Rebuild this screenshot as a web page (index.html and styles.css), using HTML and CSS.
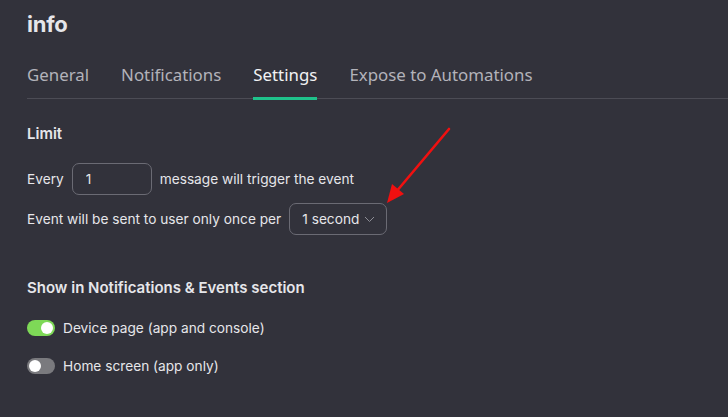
FILE: index.html
```html
<!DOCTYPE html>
<html>
<head>
  <title>info - Settings</title>
  <link rel="stylesheet" href="styles.css">
</head>
<body>
  <h1 class="title">info</h1>
  <nav class="tabs">
    <a class="tab">General</a>
    <a class="tab">Notifications</a>
    <a class="tab active">Settings</a>
    <a class="tab">Expose to Automations</a>
  </nav>

  <section class="section">
    <h2 class="section-title">Limit</h2>
    <div class="row">
      <span>Every</span>
      <input class="field" type="text" value="1">
      <span>message will trigger the event</span>
    </div>
    <div class="row">
      <span>Event will be sent to user only once per</span>
      <div class="select">
        <span>1 second</span>
        <svg width="11" height="7" viewBox="0 0 11 7"><path d="M1 1l4.5 4.5L10 1" fill="none" stroke="#8e8e96" stroke-width="1"/></svg>
      </div>
    </div>
  </section>

  <section class="section show">
    <h2 class="section-title">Show in Notifications &amp; Events section</h2>
    <label class="switch-row">
      <span class="switch on"><span class="knob"></span></span>
      Device page (app and console)
    </label>
    <label class="switch-row">
      <span class="switch"><span class="knob"></span></span>
      Home screen (app only)
    </label>
  </section>

  <svg class="arrow" width="80" height="90" viewBox="0 0 80 90">
    <line x1="68" y1="7" x2="15" y2="70" stroke="#f01010" stroke-width="2.6" stroke-linecap="round"/>
    <polygon points="6,81 11,62 23,72" fill="#f01010"/>
  </svg>
</body>
</html>
```

FILE: styles.css
```css
body { margin: 0; padding: 0 0 0 27px; background: #32323b; color: #e6e6ea; font-family: Inter, "Liberation Sans", sans-serif; font-size: 13.7px; position: relative; height: 417px; overflow: hidden; }
.title { margin: 0; padding-top: 9px; font-size: 22px; font-weight: 700; line-height: 30px; letter-spacing: -0.2px; }
.tabs { display: flex; gap: 32px; margin-top: 24px; border-bottom: 1px solid #4c4c55; font-family: "Noto Sans", "Open Sans", sans-serif; font-size: 16.85px; }
.tab { color: #b3b3ba; padding-bottom: 10px; line-height: 24px; border-bottom: 3px solid transparent; margin-bottom: -2px; }
.tab.active { color: #f2f2f4; border-bottom-color: #1fc28b; }
.section { padding-top: 25px; }
.section-title { margin: 0 0 19px; font-size: 15px; font-weight: 600; line-height: 20px; }
.row { display: flex; align-items: center; gap: 8px; height: 32px; margin-bottom: 8px; }
.field { width: 80px; height: 32px; box-sizing: border-box; background: transparent; border: 1px solid #6b6b74; border-radius: 7px; color: #e6e6ea; font: inherit; padding: 0 13px; outline: none; }
.select { display: flex; align-items: center; gap: 5px; height: 32px; box-sizing: border-box; border: 1px solid #6b6b74; border-radius: 7px; padding: 0 11px 0 12px; }
.show { padding-top: 35px; }
.show .section-title { margin-bottom: 22px; }
.switch-row { display: flex; align-items: center; gap: 8px; height: 16px; margin-bottom: 22px; }
.switch { width: 28px; height: 16px; border-radius: 8px; background: #7a7a7e; position: relative; }
.switch.on { background: #7ed957; }
.knob { position: absolute; top: 2px; left: 2px; width: 12px; height: 12px; border-radius: 50%; background: #fff; }
.switch.on .knob { left: 14px; }
.arrow { position: absolute; left: 381px; top: 122px; }
```
